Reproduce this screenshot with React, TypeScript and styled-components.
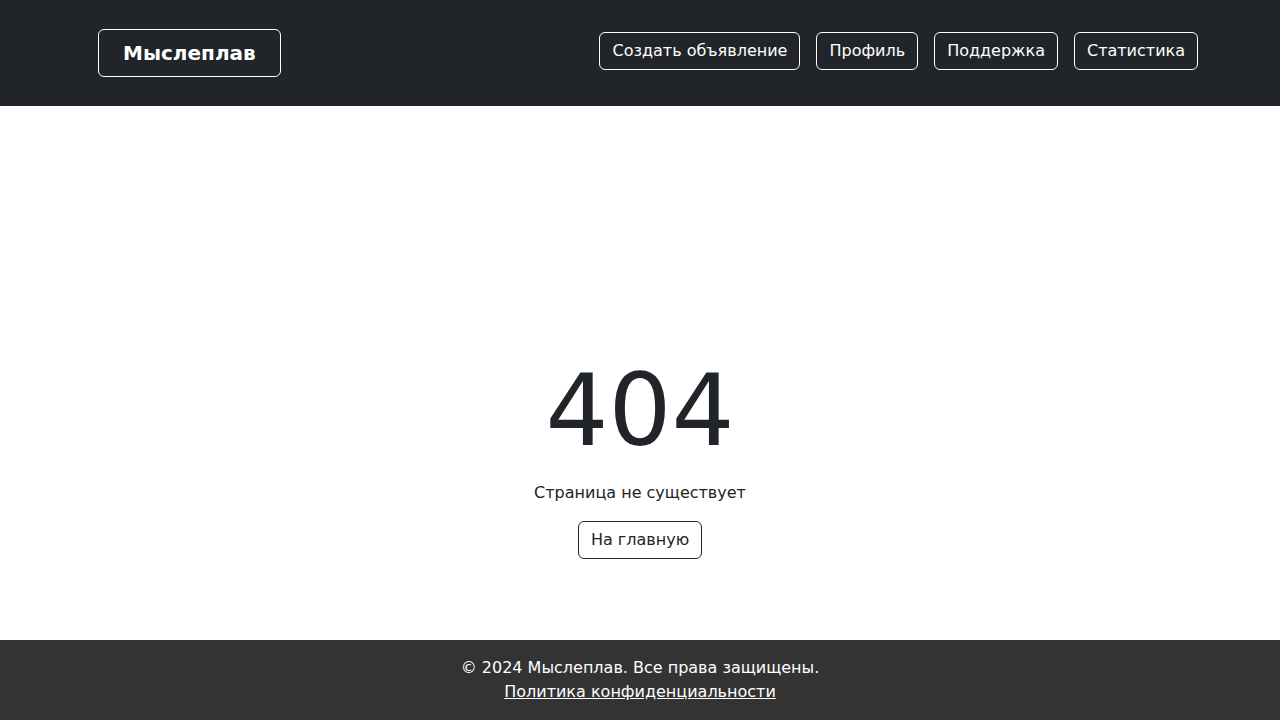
import React from "react";
import styled, { createGlobalStyle } from "styled-components";

const Global = createGlobalStyle`
  html, body { margin: 0; padding: 0; }
  body {
    font-family: "DejaVu Sans", sans-serif;
    font-size: 16px;
    line-height: 1.5;
    color: #212529;
    background: #fff;
  }
  * { box-sizing: border-box; }
`;

const Page = styled.div`
  display: flex;
  flex-direction: column;
  height: 720px;
  overflow: hidden;
`;

const Header = styled.header`
  background: #212529;
  height: 106px;
  flex: 0 0 auto;
`;

const HeaderInner = styled.div`
  width: 1116px;
  margin: 0 auto;
  padding-top: 29px;
  display: flex;
  align-items: flex-start;
  justify-content: space-between;
`;

const Logo = styled.a`
  margin-left: 16px;
  display: inline-block;
  padding: 8px 24px;
  border: 1px solid #fff;
  border-radius: 6px;
  color: #fff;
  font-weight: 700;
  font-size: 20px;
  line-height: 30px;
  text-decoration: none;
`;

const Nav = styled.nav`
  display: flex;
  gap: 16px;
  margin-top: 3px;
`;

const NavButton = styled.a`
  display: inline-block;
  padding: 6px 12px;
  border: 1px solid #fff;
  border-radius: 6px;
  color: #fff;
  font-size: 16px;
  line-height: 24px;
  text-decoration: none;
`;

const Main = styled.main`
  flex: 1 1 auto;
  display: flex;
  flex-direction: column;
  align-items: center;
  padding-top: 255px;
`;

const Code = styled.h1`
  margin: 0;
  font-size: 99px;
  font-weight: 400;
  line-height: 1;
  color: #212529;
`;

const Message = styled.p`
  margin: 21px 0 0;
  font-size: 16px;
  line-height: 24px;
`;

const HomeButton = styled.a`
  margin-top: 16px;
  display: inline-block;
  padding: 6px 12px;
  border: 1px solid #212529;
  border-radius: 6px;
  color: #212529;
  font-size: 16px;
  line-height: 24px;
  text-decoration: none;
`;

const Footer = styled.footer`
  flex: 0 0 auto;
  background: #333;
  color: #fff;
  text-align: center;
  padding: 16px 0 16px;
  font-size: 16px;
  line-height: 24px;
`;

const FooterLink = styled.a`
  color: #fff;
  text-decoration: underline;
`;

export default function App() {
  return (
    <>
      <Global />
      <Page>
        <Header>
          <HeaderInner>
            <Logo href="#">Мыслеплав</Logo>
            <Nav>
              <NavButton href="#">Создать объявление</NavButton>
              <NavButton href="#">Профиль</NavButton>
              <NavButton href="#">Поддержка</NavButton>
              <NavButton href="#">Статистика</NavButton>
            </Nav>
          </HeaderInner>
        </Header>
        <Main>
          <Code>404</Code>
          <Message>Страница не существует</Message>
          <HomeButton href="#">На главную</HomeButton>
        </Main>
        <Footer>
          <div>© 2024 Мыслеплав. Все права защищены.</div>
          <FooterLink href="#">Политика конфиденциальности</FooterLink>
        </Footer>
      </Page>
    </>
  );
}
